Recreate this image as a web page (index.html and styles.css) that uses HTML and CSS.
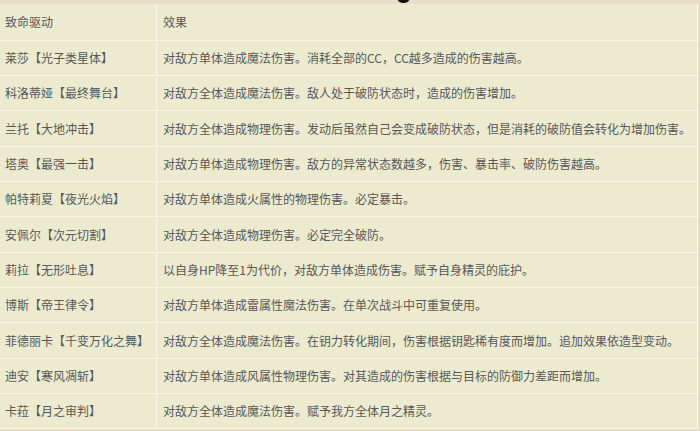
FILE: index.html
```html
<!DOCTYPE html>
<html lang="zh">
<head>
<meta charset="utf-8">
<link rel="stylesheet" href="styles.css">
</head>
<body>
<div class="topbar"><span class="dot"></span></div>
<table class="skills">
<tr class="head"><td class="c1">致命驱动</td><td class="c2">效果</td></tr>
<tr><td class="c1">莱莎【光子类星体】</td><td class="c2">对敌方单体造成魔法伤害。消耗全部的CC，CC越多造成的伤害越高。</td></tr>
<tr><td class="c1">科洛蒂娅【最终舞台】</td><td class="c2">对敌方全体造成魔法伤害。敌人处于破防状态时，造成的伤害增加。</td></tr>
<tr><td class="c1">兰托【大地冲击】</td><td class="c2">对敌方全体造成物理伤害。发动后虽然自己会变成破防状态，但是消耗的破防值会转化为增加伤害。</td></tr>
<tr><td class="c1">塔奥【最强一击】</td><td class="c2">对敌方单体造成物理伤害。敌方的异常状态数越多，伤害、暴击率、破防伤害越高。</td></tr>
<tr><td class="c1">帕特莉夏【夜光火焰】</td><td class="c2">对敌方单体造成火属性的物理伤害。必定暴击。</td></tr>
<tr><td class="c1">安佩尔【次元切割】</td><td class="c2">对敌方全体造成物理伤害。必定完全破防。</td></tr>
<tr><td class="c1">莉拉【无形吐息】</td><td class="c2">以自身HP降至1为代价，对敌方单体造成伤害。赋予自身精灵的庇护。</td></tr>
<tr><td class="c1">博斯【帝王律令】</td><td class="c2">对敌方单体造成雷属性魔法伤害。在单次战斗中可重复使用。</td></tr>
<tr><td class="c1">菲德丽卡【千变万化之舞】</td><td class="c2">对敌方全体造成魔法伤害。在钥力转化期间，伤害根据钥匙稀有度而增加。追加效果依造型变动。</td></tr>
<tr><td class="c1">迪安【寒风凋斩】</td><td class="c2">对敌方单体造成风属性物理伤害。对其造成的伤害根据与目标的防御力差距而增加。</td></tr>
<tr><td class="c1">卡菈【月之审判】</td><td class="c2">对敌方全体造成魔法伤害。赋予我方全体月之精灵。</td></tr>
</table>
</body>
</html>
```
FILE: styles.css
```css
html, body {
  margin: 0;
  padding: 0;
}
body {
  width: 700px;
  height: 431px;
  overflow: hidden;
  background: #e9dfc6;
  font-family: "Noto Sans CJK SC", "Noto Sans", sans-serif;
  font-size: 12px;
  color: #585858;
}
.topbar {
  height: 4px;
  position: relative;
  overflow: hidden;
}
.dot {
  position: absolute;
  left: 397px;
  top: -8px;
  width: 13px;
  height: 11px;
  border-radius: 50%;
  background: #111;
}
.skills {
  width: 698px;
  border-collapse: collapse;
  background: #ecebd0;
  table-layout: fixed;
}
.skills td {
  border: 1.5px solid #faf7e4;
  height: 34.35px;
  padding: 0 5px;
  vertical-align: middle;
  white-space: nowrap;
  line-height: 16px;
}
.skills tr:first-child td {
  border-top: none;
}
.skills td.c1 {
  width: 146px;
  border-left: none;
}
.skills td.c2 {
  padding-left: 6px;
}
.skills tr.head td {
  height: 35.7px;
}
```
